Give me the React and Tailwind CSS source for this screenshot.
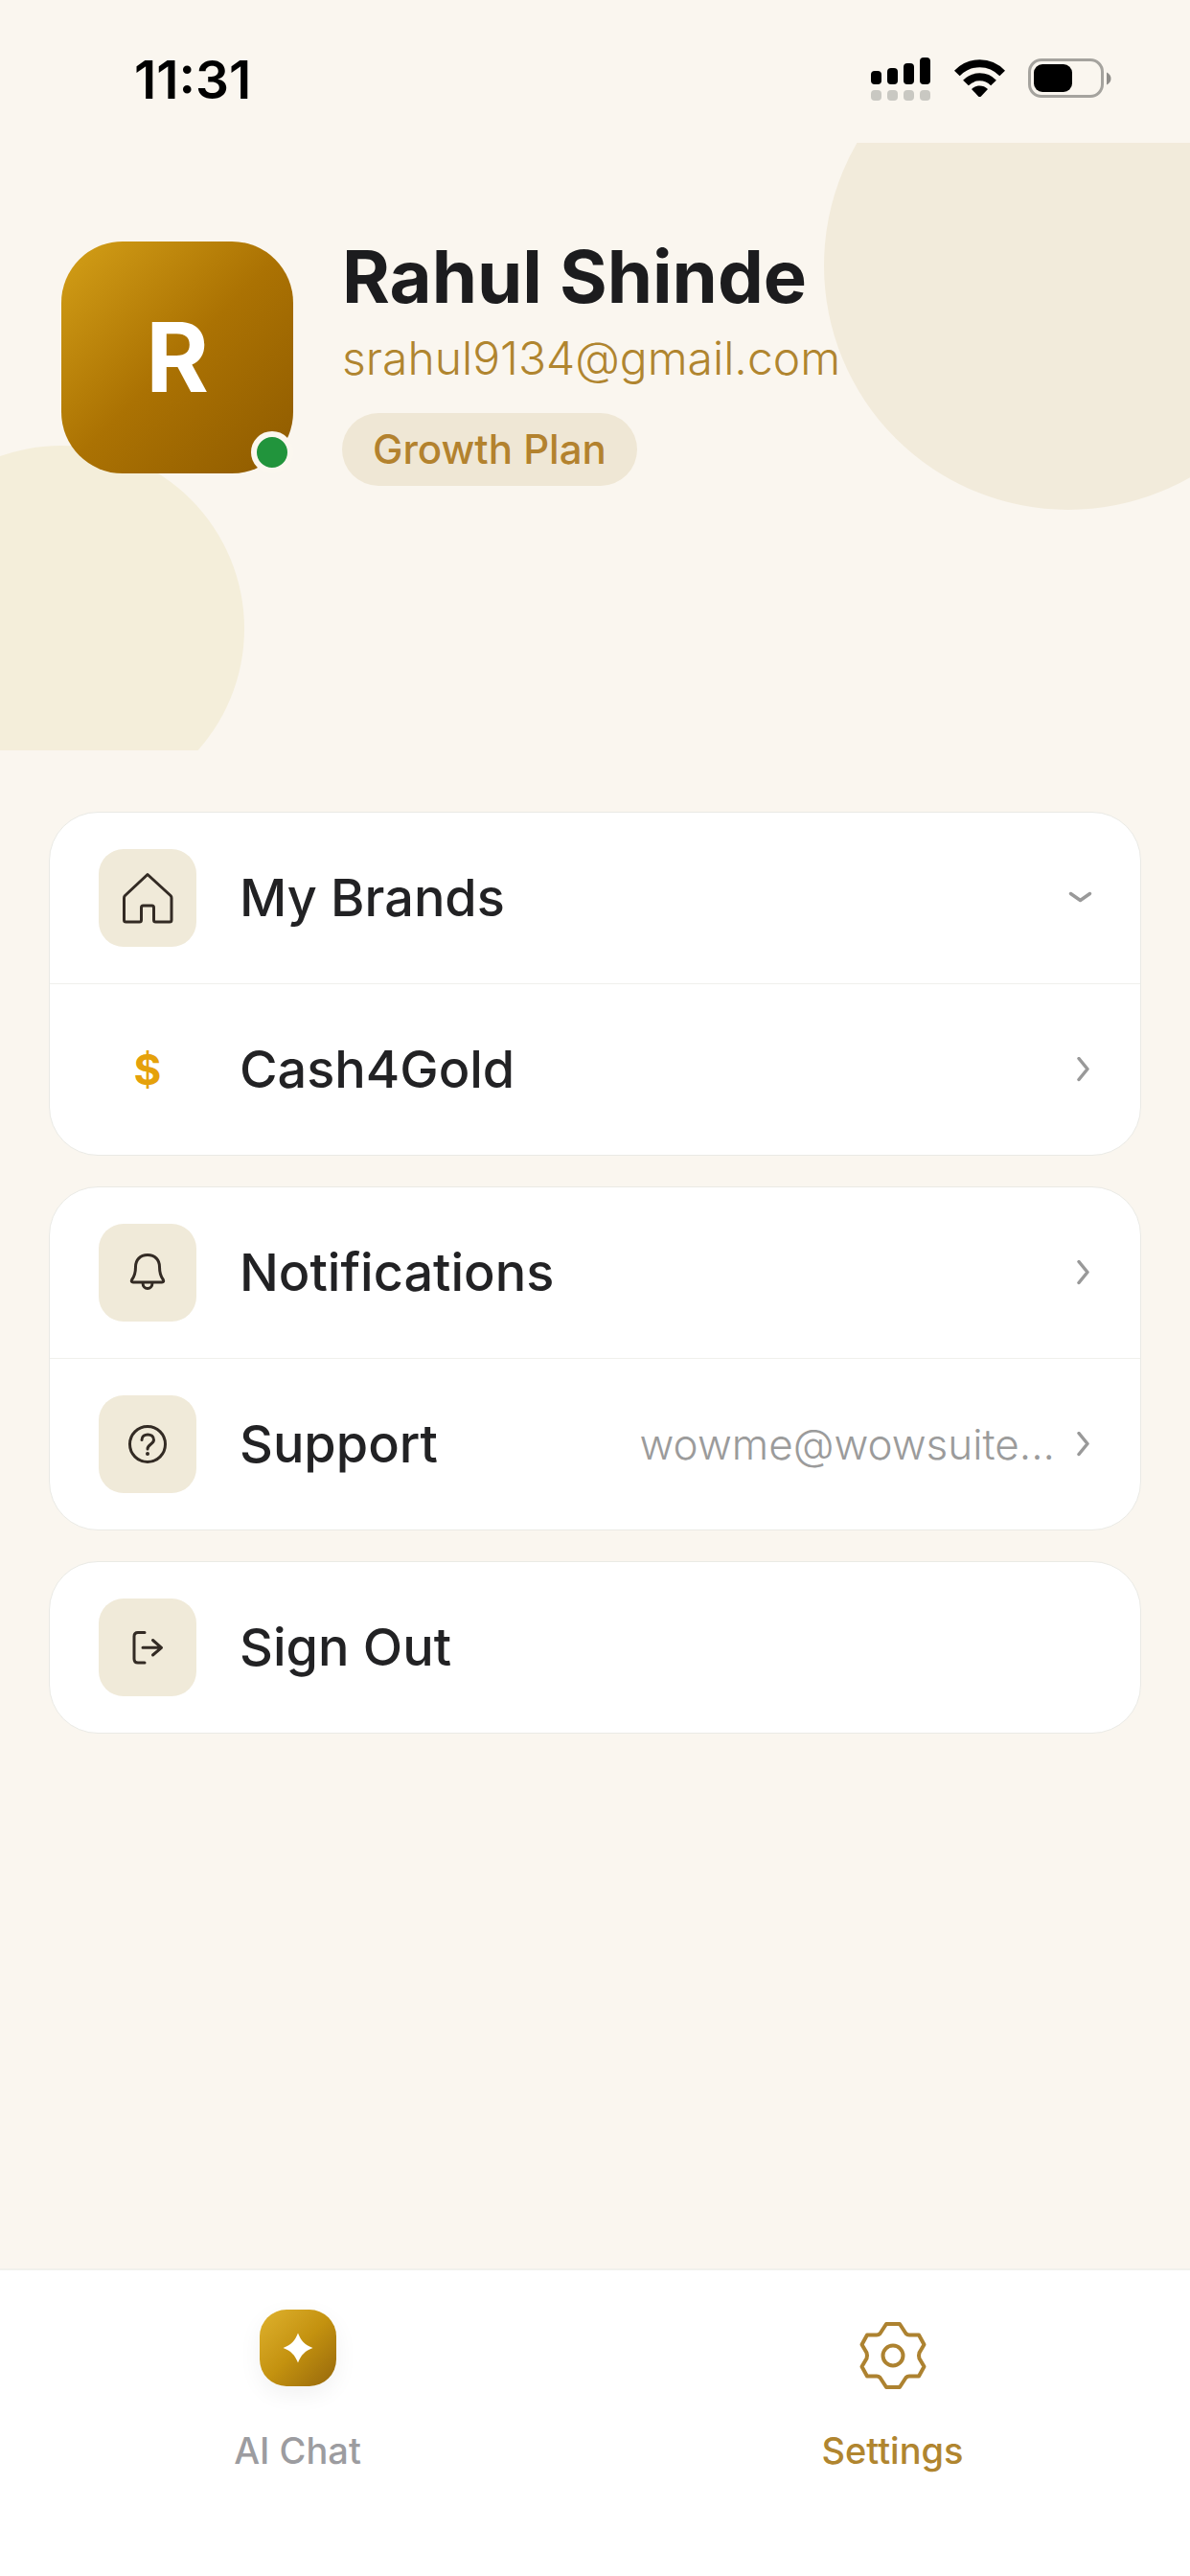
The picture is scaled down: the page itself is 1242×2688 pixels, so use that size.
import { useState } from "react";

function StatusBar() {
    return (
        <div className="flex h-[149px] items-start justify-between pl-[140px] pr-[82px] pt-[50px] text-black">
            <span className="text-[55px] leading-[66px] font-semibold">11:31</span>
            <div className="flex items-center gap-[24px] pt-[8px]">
                <svg width="63" height="48" viewBox="0 0 63 48">
                    <rect x="0" y="16" width="11" height="14" rx="4" />
                    <rect x="17" y="13" width="11" height="17" rx="4" />
                    <rect x="34" y="8" width="11" height="22" rx="4" />
                    <rect x="51" y="2" width="11" height="28" rx="4" />
                    <g fill="#c9c8c2">
                        <rect x="0" y="36" width="11" height="11" rx="4" />
                        <rect x="17" y="36" width="11" height="11" rx="4" />
                        <rect x="34" y="36" width="11" height="11" rx="4" />
                        <rect x="51" y="36" width="11" height="11" rx="4" />
                    </g>
                </svg>
                <svg width="53" height="40" viewBox="0 0 53 40">
                    <g fill="none" stroke="#000" strokeWidth="8">
                        <path d="M2.8 14.5C16 0.8 37 0.8 50.2 14.5" />
                        <path d="M12 24.5C20 16.2 33 16.2 41 24.5" />
                    </g>
                    <path d="M18 31c5-4.600 12-4.600 17 0l-7 7.400c-.9.9-2.100.9-3 0z" />
                </svg>
                <svg width="87" height="42" viewBox="0 0 87 42">
                    <rect x="1.500" y="1.500" width="76" height="38" rx="12.500" fill="none" stroke="#a5a39e" strokeWidth="3" />
                    <rect x="6" y="6" width="40" height="29" rx="9" />
                    <path d="M82 14.500c6 2.500 6 10.500 0 13z" fill="#8f8d89" />
                </svg>
            </div>
        </div>
    );
}

function ProfileHeader() {
    return (
        <header className="relative h-[634px] overflow-hidden">
            {/* decorative circles behind the profile */}
            <div className="absolute -top-[127px] -right-[128px] size-[510px] rounded-full bg-[#f2ebdb]"></div>
            <div className="absolute -bottom-[64px] -left-[127px] size-[382px] rounded-full bg-[#f4eeda]"></div>

            <div className="relative flex items-start gap-[51px] px-[64px] pt-[103px]">
                <div className="relative flex size-[242px] shrink-0 items-center justify-center rounded-[64px] bg-linear-135 from-[#d4a017] via-[#ab7203] to-[#8f5b00]">
                    <span className="text-[100px] leading-[116px] font-bold text-white">R</span>
                    <span className="absolute right-0 bottom-0 size-[44px] rounded-full border-6 border-[#fbf7ef] bg-[#21943c]"></span>
                </div>
                <div className="flex min-w-0 flex-col items-start">
                    <h1 className="text-[76px] leading-[72px] font-bold text-[#1c1c1e]">Rahul Shinde</h1>
                    <p className="mt-[20px] text-[48px] leading-[60px] font-light text-[#b0852f]">srahul9134@gmail.com</p>
                    <span className="mt-[27px] flex h-[76px] items-center rounded-full bg-[#efe7d5] px-[32px] text-[42px] leading-[48px] font-[450] text-[#b3822e]">
                        Growth Plan
                    </span>
                </div>
            </div>
        </header>
    );
}

function IconTile({ children }) {
    return (
        <span className="flex size-[102px] shrink-0 items-center justify-center rounded-[26px] bg-[#f0ead9]">
            <svg width="102" height="102" viewBox="0 0 102 102" fill="none" stroke="#332b24" strokeWidth="3" strokeLinecap="round" strokeLinejoin="round">
                {children}
            </svg>
        </span>
    );
}

function HomeIcon() {
    return (
        <IconTile>
            <path d="M51 26.500 27.500 48.500Q26.500 49.500 26.500 51V74Q26.500 76 28.500 76H42.500Q44.500 76 44.500 74V61Q44.500 59 46.500 59H55.500Q57.500 59 57.500 61V74Q57.500 76 59.500 76H74Q76 76 76 74V51Q76 49.500 75 48.500Z" />
        </IconTile>
    );
}

function BellIcon() {
    return (
        <IconTile>
            <path d="M51 32.500C43 32.500 38.500 38 38.500 45C38.500 53 36.500 56 34.600 58.500Q33.500 61 36 61H66Q68.500 61 67.400 58.500C65.500 56 63.500 53 63.500 45C63.500 38 59 32.500 51 32.500Z" />
            <path d="M46 61.500C46 69.500 56 69.500 56 61.500" />
        </IconTile>
    );
}

function HelpIcon() {
    return (
        <IconTile>
            <circle cx="51" cy="51" r="18.500" />
            <path d="M45 46.500C45 39 57.500 39 57.500 46.500C57.500 51 51 51 51 56" />
            <circle cx="51" cy="61" r="2" fill="#332b24" stroke="none" />
        </IconTile>
    );
}

function SignOutIcon() {
    return (
        <IconTile>
            <path d="M48 35.500H41Q37 35.500 37 39.500V63Q37 67 41 67H48" />
            <path d="M46 51.300H65.500M56.500 43.500 65.500 51.300 56.500 59" />
        </IconTile>
    );
}

function DollarIcon() {
    return (
        <span className="flex size-[102px] shrink-0 items-center justify-center text-[44px] leading-[56px] font-bold text-[#e5a10a]">$</span>
    );
}

function Chevron({ down }) {
    return (
        <svg className="shrink-0" width="26" height="26" viewBox="0 0 26 26" fill="none" stroke="#999" strokeWidth="3.500" strokeLinecap="round" strokeLinejoin="round">
            {down ? <path d="M2.500 8.500 12.500 15.500 22.500 8.500" /> : <path d="M11 1.500 20 12.500 11 23.500" />}
        </svg>
    );
}

function Card({ children }) {
    return (
        <section className="divide-y divide-[#f0f0ec] overflow-hidden rounded-[51px] border border-[#eaeae5] bg-white">
            {children}
        </section>
    );
}

function Row({ icon, label, value, chevron, onClick }) {
    return (
        <button type="button" onClick={onClick} className="flex w-full items-center pl-[51px] pr-[49px] py-[38px] text-left">
            {icon}
            <span className="ml-[45px] flex-1 text-[54px] leading-[64px] font-[450] text-[#222224]">{label}</span>
            {value && <span className="mr-[14px] text-[44px] leading-[56px] font-light text-[#9b9b9b]">{value}</span>}
            {chevron && <Chevron down={chevron === "down"} />}
        </button>
    );
}

function TabBar({ tab, setTab }) {
    return (
        <nav className="flex h-[321px] border-t-2 border-[#f1f1ec] bg-white pt-[41px]">
            <button type="button" onClick={() => setTab("chat")} className="flex flex-1 flex-col items-center">
                <span className="flex size-[80px] items-center justify-center rounded-[28px] bg-linear-135 from-[#dfb22c] via-[#c4920f] to-[#96680c] shadow-[0_8px_24px_rgba(0,0,0,0.06)]">
                    <svg width="32" height="32" viewBox="0 0 32 32" fill="#fff">
                        <path d="M16 0.500C19 8.500 23.500 13 31.500 16C23.500 19 19 23.500 16 31.500C13 23.500 8.500 19 0.500 16C8.500 13 13 8.500 16 0.500Z" />
                    </svg>
                </span>
                <span className="mt-[45px] text-[38px] leading-[44px] font-[450] text-[#9c9ca0]">AI Chat</span>
            </button>
            <button type="button" onClick={() => setTab("settings")} aria-current={tab === "settings"} className="flex flex-1 flex-col items-center">
                <svg className="mt-[12px]" width="72" height="72" viewBox="-36 -36 72 72" fill="none" stroke="#ad8230" strokeWidth="4" strokeLinejoin="round">
                    <path d="M-7-33H7L13.500-23Q15-21.500 17-21.500H27L32.500-11.500 27.500-3Q26.500 0 27.500 3L32.500 11.500 27 21.500H17Q15 21.500 13.500 23L7 33H-7L-13.500 23Q-15 21.500-17 21.500H-27L-32.500 11.500-27.500 3Q-26.500 0-27.500-3L-32.500-11.500-27-21.500H-17Q-15-21.500-13.500-23Z" />
                    <circle r="10.500" />
                </svg>
                <span className="mt-[41px] text-[38px] leading-[44px] font-medium text-[#b0852f]">Settings</span>
            </button>
        </nav>
    );
}

export default function App() {
    const [tab, setTab] = useState("settings");
    const [open, setOpen] = useState(true);

    return (
        <div className="flex min-h-screen flex-col bg-[#faf6ef] font-[Inter,sans-serif]">
            <StatusBar />
            <ProfileHeader />
            <main className="flex flex-1 flex-col gap-[32px] px-[51px] pt-[64px]">
                <Card>
                    <Row icon={<HomeIcon />} label="My Brands" chevron="down" onClick={() => setOpen(!open)} />
                    {open && <Row icon={<DollarIcon />} label="Cash4Gold" chevron="right" />}
                </Card>
                <Card>
                    <Row icon={<BellIcon />} label="Notifications" chevron="right" />
                    <Row icon={<HelpIcon />} label="Support" value="wowme@wowsuite..." chevron="right" />
                </Card>
                <Card>
                    <Row icon={<SignOutIcon />} label="Sign Out" />
                </Card>
            </main>
            <TabBar tab={tab} setTab={setTab} />
        </div>
    );
}
